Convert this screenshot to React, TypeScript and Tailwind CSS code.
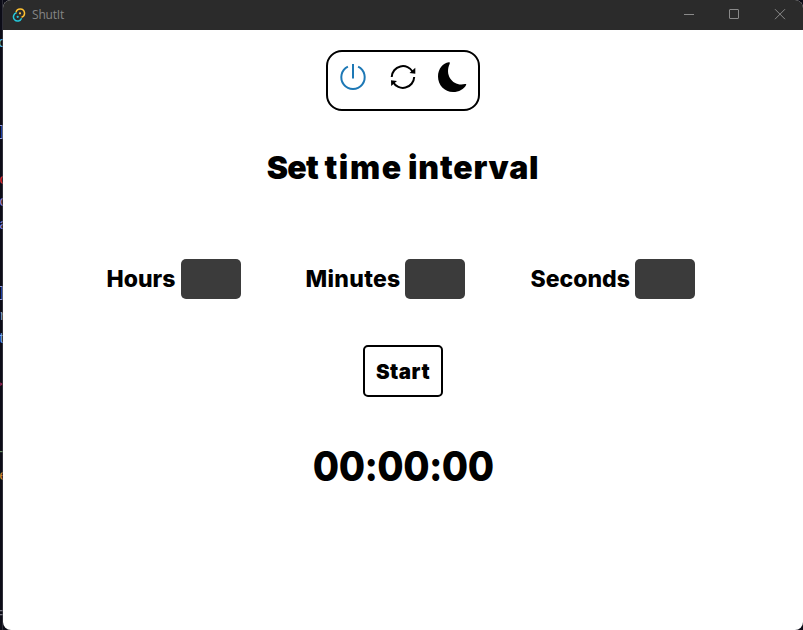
import React from "react";

const fragments = [
  { ch: "c", cls: "top-[35px] -left-[2px] text-[#58b8e8]" },
  { ch: "]", cls: "top-[124px] -left-[3px] text-[#8f98dd]" },
  { ch: "o", cls: "top-[172px] -left-px text-[#e02b35]" },
  { ch: "c", cls: "top-[194px] -left-px text-[#a080c8]" },
  { ch: "a", cls: "top-[217px] -left-px text-[#8d83df]" },
  { ch: "]", cls: "top-[285px] -left-[3px] text-[#8f98dd]" },
  { ch: "r", cls: "top-[308px] -left-px text-[#a5a5b5]" },
  { ch: "t", cls: "top-[331px] -left-[2px] text-[#78aaf0]" },
  { ch: ">", cls: "top-[377px] -left-[6px] text-[#99255f]" },
  { ch: "-", cls: "top-[444px] -left-[3px] text-[#6a8c62]" },
  { ch: "e", cls: "top-[468px] -left-px text-[#d5862d]" },
  { ch: "=", cls: "top-[606px] -left-[3px] text-[#777783]" },
];

function Field({ label, width, spacing }: { label: string; width: string; spacing: string }) {
  return (
    <label className="flex h-10 items-center">
      <span className={`${width} ${spacing} whitespace-nowrap text-[23px] leading-10`}>{label}</span>
      <input className="h-10 w-[60px] rounded-[5px] bg-[#3b3b3b] outline-none" />
    </label>
  );
}

export default function App() {
  return (
    <div className="relative h-[630px] w-[803px] overflow-hidden bg-[#0c0c17] pl-[3px]">
      <div className="absolute left-0 top-0 h-full w-[3px] overflow-hidden">
        {fragments.map((f) => (
          <span key={f.cls} className={`absolute font-['Liberation_Mono',monospace] text-[15px] leading-[18px] ${f.cls}`}>{f.ch}</span>
        ))}
        <div className="absolute right-0 top-0 h-full w-px bg-[#44444d]/60" />
      </div>
      <div className="flex h-[630px] w-[800px] flex-col overflow-hidden rounded-[8px] bg-white">
        <header className="flex h-[30px] shrink-0 items-center bg-[#2b2b2b] text-[#858585]">
          <svg className="ml-[9px] h-[14px] w-[14px]" viewBox="0 0 14 14" fill="none" strokeWidth="1.5">
            <path d="M4 4.3A4.3 4.3 0 1 1 9.5 9.3" stroke="#ffc131" />
            <path d="M4.5 4.8A4.2 4.2 0 1 0 9.6 10.3" stroke="#24c8db" />
            <circle cx="8" cy="5.3" r="1.1" fill="#ffc131" />
            <circle cx="5.7" cy="8.8" r="1.1" fill="#24c8db" />
          </svg>
          <span className="ml-[6px] flex-1 font-['Open_Sans',sans-serif] text-[12px] leading-4 tracking-[-0.2px]">ShutIt</span>
          <svg className="h-[30px] w-[120px]" viewBox="0 0 120 30" fill="none" stroke="#8a8a8a">
            <path d="M1 14.5h10" />
            <rect x="46.5" y="9.5" width="9" height="9" rx="0.5" />
            <path d="M92 9.2l10 10M102 9.2l-10 10" />
          </svg>
        </header>
        <main className="flex flex-1 flex-col items-center font-['Inter',sans-serif] font-extrabold text-black">
          <nav className="mt-5 h-[61px] w-[154px] shrink-0 rounded-[16px] border-2 border-black">
            <svg className="h-[57px] w-[150px]" viewBox="328 52 150 57" fill="none">
              <path d="M347.9 66.7A11.7 11.7 0 1 0 358.1 66.7M353 64V78.5" stroke="#1d78b5" strokeWidth="2" />
              <path d="M391.7 77A11.3 11.3 0 0 1 412.9 72M414.2 77A11.3 11.3 0 0 1 393 82" stroke="#000" strokeWidth="2" />
              <path d="M415.3 67.8V73.8L409.5 73Z M391 80.2L397 81L391.2 86Z" fill="#000" />
              <path d="M448.8 62.3C443 63 438 69 438 76.5C438 85 444.5 92 453 92C459 92 464 89.3 466.2 84.7C466.5 84 465.8 83.7 465 84C454 87 444 76 449.7 63.7C450 62.6 449.7 62.2 448.8 62.3Z" fill="#000" />
            </svg>
          </nav>
          <h1 className="mt-[37px] h-10 shrink-0 whitespace-nowrap text-[32px] font-black leading-10">
            <span className="tracking-[-0.7px]">Set</span>{" "}
            <span className="tracking-[1.6px] [margin-right:-1px]">time</span>{" "}
            <span className="tracking-[0.8px]">interval</span>
          </h1>
          <div className="ml-[-5px] mt-[71px] flex shrink-0">
            <Field label="Hours" width="w-[74px]" spacing="tracking-normal" />
            <div className="w-[65px]" />
            <Field label="Minutes" width="w-[99px]" spacing="tracking-[0.3px]" />
            <div className="w-[66px]" />
            <Field label="Seconds" width="w-[104px]" spacing="tracking-normal" />
          </div>
          <button className="mt-[46px] h-[52px] w-20 shrink-0 rounded-[5px] border-2 border-black pt-0.5 text-[20.5px] font-black tracking-[0.5px]">Start</button>
          <div className="mt-[45px] h-12 origin-center scale-x-[0.93] whitespace-nowrap text-[41px] leading-[48px] tracking-[-0.6px] [font-feature-settings:'calt'_0]">00:00:00</div>
        </main>
      </div>
    </div>
  );
}
